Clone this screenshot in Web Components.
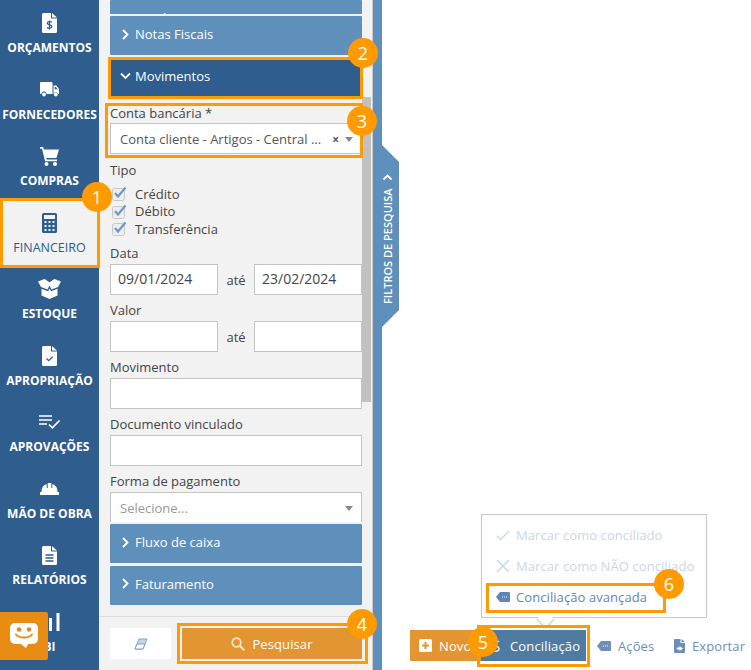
<!DOCTYPE html>
<html lang="pt-BR">
<head>
<meta charset="utf-8">
<title>Conciliação</title>
<style>
  html, body { margin: 0; height: 100%; overflow: hidden; background: #fff; }
  body { font-family: "Open Sans", "Liberation Sans", sans-serif; font-size: 13px; }
  svg { display: block; }
</style>
</head>
<body>
<app-shell>
  <side-nav>
    <nav-item label="ORÇAMENTOS"><svg width="15" height="20" viewBox="0 0 15 20"><path fill="#fff" d="M1.500 0H9v5.500h6V18.500a1.500 1.500 0 0 1-1.500 1.500h-12A1.500 1.500 0 0 1 0 18.500V1.500A1.500 1.500 0 0 1 1.500 0zM10 0l5 4.500h-5z"/><path fill="none" stroke="#2e5d8e" stroke-width="1.300" d="M9.800 9.300C9 8.400 5.300 8.300 5.300 10.300c0 2 4.600 1.300 4.600 3.300 0 2-3.900 1.900-4.900.9M7.500 7.500v9"/></svg></nav-item>
    <nav-item label="FORNECEDORES"><svg width="19" height="15" viewBox="0 0 19 15"><path fill="#fff" d="M1 0h10.500a1 1 0 0 1 1 1v11H6.500a2.500 2.500 0 0 0-5 0H1a1 1 0 0 1-1-1V1a1 1 0 0 1 1-1zM13.500 3.500h2.700L19 7v5h-.8a2.500 2.500 0 0 0-4.700 0z"/><circle cx="4" cy="12.500" r="1.900" fill="#fff"/><circle cx="15.800" cy="12.500" r="1.900" fill="#fff"/><path fill="#2e5d8e" d="M14.700 5h1.200l1.700 2.200h-2.900z"/></svg></nav-item>
    <nav-item label="COMPRAS"><svg width="19" height="19" viewBox="0 0 19 19"><path fill="#fff" d="M0 0h3.200l.7 2.500H19l-2.600 8.500H6.300l.4 1.600H17v1.700H5.100L2 1.700H0z"/><circle cx="6.500" cy="17" r="2" fill="#fff"/><circle cx="15" cy="17" r="2" fill="#fff"/></svg></nav-item>
    <nav-item label="FINANCEIRO" active><svg width="15" height="20" viewBox="0 0 15 20"><path fill="#2e5d8e" fill-rule="evenodd" d="M1.500 0h12A1.500 1.500 0 0 1 15 1.500v17a1.500 1.500 0 0 1-1.500 1.500h-12A1.500 1.500 0 0 1 0 18.500v-17A1.500 1.500 0 0 1 1.500 0zM2 2v4h11V2zM2.500 8v2h2V8zm4 0v2h2V8zm4 0v2h2V8zm-8 4v2h2v-2zm4 0v2h2v-2zm4 0v2h2v-2zm-8 4v2h2v-2zm4 0v2h2v-2zm4 0v2h2v-2z"/></svg></nav-item>
    <nav-item label="ESTOQUE"><svg width="23" height="20" viewBox="0 0 23 20"><path fill="#fff" d="M0 2.500 6.500 0 11.500 3.200 16.500 0 23 2.500 20 8 13.500 10.500 11.500 6.500 9.500 10.500 3 8zM3.500 9.800 10 12.300 11.500 9.500 13 12.300 19.500 9.800V16.500L11.500 20 3.500 16.500z"/></svg></nav-item>
    <nav-item label="APROPRIAÇÃO"><svg width="15" height="20" viewBox="0 0 15 20"><path fill="#fff" d="M1.500 0H9v5.500h6V18.500a1.500 1.500 0 0 1-1.500 1.500h-12A1.500 1.500 0 0 1 0 18.500V1.500A1.500 1.500 0 0 1 1.500 0zM10 0l5 4.500h-5z"/><path fill="none" stroke="#2e5d8e" stroke-width="1.300" d="M4.500 12.500l2.200 2.200 4-4"/></svg></nav-item>
    <nav-item label="APROVAÇÕES"><svg width="21" height="14" viewBox="0 0 21 14"><path fill="none" stroke="#fff" stroke-width="1.700" d="M0 1h13M0 5h13M0 9h8M10 9.500l3.300 3.300L20.500 5.500"/></svg></nav-item>
    <nav-item label="MÃO DE OBRA"><svg width="19" height="12" viewBox="0 0 19 12"><path fill="#fff" d="M7.700 0h3.600v5h1V1A8 8 0 0 1 17.500 9H19v3H0V9h1.500A8 8 0 0 1 6.700 1v4h1z"/></svg></nav-item>
    <nav-item label="RELATÓRIOS"><svg width="15" height="19" viewBox="0 0 15 19"><path fill="#fff" d="M1.500 0H9v5.500h6V17.500a1.500 1.500 0 0 1-1.500 1.500h-12A1.500 1.500 0 0 1 0 17.500V1.500A1.500 1.500 0 0 1 1.500 0zM10 0l5 4.500h-5z"/><path fill="none" stroke="#2e5d8e" stroke-width="1.500" d="M3.500 9h8M3.500 12h8M3.500 15h8"/></svg></nav-item>
    <nav-item label="BI"><svg width="24" height="18" viewBox="0 0 24 18"><path fill="#fff" d="M5 10h3v8H5zM11 5h3v13h-3zM18.500 0h3v18h-3z"/></svg></nav-item>
  </side-nav>

  <filter-panel>
    <acc-header cut>Localização</acc-header>
    <acc-header>Notas Fiscais</acc-header>
    <acc-header open>Movimentos</acc-header>

    <form-field label="Conta bancária *" style="margin-top:7px">
      <select-box value="Conta cliente - Artigos - Central ..." clear style="margin-top:-1px"></select-box>
    </form-field>

    <form-field label="Tipo" style="margin-top:7px;margin-bottom:6.500px">
      <check-list>
        <check-row>Crédito</check-row>
        <check-row>Débito</check-row>
        <check-row>Transferência</check-row>
      </check-list>
    </form-field>

    <form-field label="Data">
      <range-row from="09/01/2024" to="23/02/2024"></range-row>
    </form-field>
    <form-field label="Valor">
      <range-row></range-row>
    </form-field>
    <form-field label="Movimento"><text-box></text-box></form-field>
    <form-field label="Documento vinculado"><text-box></text-box></form-field>
    <form-field label="Forma de pagamento" style="margin-bottom:2px">
      <select-box placeholder="Selecione..." open-bottom></select-box>
    </form-field>

    <acc-header>Fluxo de caixa</acc-header>
    <acc-header>Faturamento</acc-header>
  </filter-panel>

  <filter-tab></filter-tab>

  <main-area>
    <pop-menu>
      <menu-row disabled>
        <svg slot="icon" width="14" height="11" viewBox="0 0 14 11"><path fill="none" stroke="currentColor" stroke-width="1.400" d="M1 6l3.500 3.500L13 1"/></svg>
        Marcar como conciliado
      </menu-row>
      <menu-row disabled>
        <svg slot="icon" width="14" height="14" viewBox="0 0 14 14"><path fill="none" stroke="currentColor" stroke-width="1.500" d="M1 1l12 12M13 1L1 13"/></svg>
        Marcar como NÃO conciliado
      </menu-row>
      <menu-row>
        <svg slot="icon" width="14" height="10" viewBox="0 0 14 10"><path fill="currentColor" d="M4 0h9a1 1 0 0 1 1 1v8a1 1 0 0 1-1 1H4L0 5z"/><path stroke="#fff" stroke-width="1.200" stroke-dasharray="1 1" d="M6 5h5"/></svg>
        Conciliação avançada
      </menu-row>
    </pop-menu>
    <tool-bar>
      <tool-button variant="orange">
        <svg slot="icon" width="13" height="13" viewBox="0 0 13 13"><rect width="13" height="13" rx="1.500" fill="#fff"/><path stroke="#e29530" stroke-width="2" d="M6.500 3v7M3 6.500h7"/></svg>
        Novo
      </tool-button>
      <tool-button variant="blue">
        <svg slot="icon" width="8" height="14" viewBox="0 0 8 14"><path fill="none" stroke="#dce6f0" stroke-width="1.500" d="M7 3C5.500 1 1 1.500 1 4c0 3 6 2.500 6 6 0 2.500-4.500 3-6 1"/></svg>
        Conciliação
      </tool-button>
      <tool-button>
        <svg slot="icon" width="14" height="10" viewBox="0 0 14 10"><path fill="currentColor" d="M4 0h9a1 1 0 0 1 1 1v8a1 1 0 0 1-1 1H4L0 5z"/><path stroke="#fff" stroke-width="1.200" stroke-dasharray="1 1" d="M6 5h5"/></svg>
        Ações
      </tool-button>
      <tool-button>
        <svg slot="icon" width="11" height="14" viewBox="0 0 11 14"><path fill="currentColor" d="M1 0h5.500v4H11v9a1 1 0 0 1-1 1H1a1 1 0 0 1-1-1V1a1 1 0 0 1 1-1zM7.500 0 11 3H7.500z"/><path fill="#fff" d="M3 8.500h2.500V7L9 9.500 5.500 12v-1.500H3z"/></svg>
        Exportar
      </tool-button>
    </tool-bar>
  </main-area>

  <chat-button></chat-button>

  <!-- marcações do tutorial por cima da tela -->
  <mark-box x="0" y="198" w="100" h="70"></mark-box>
  <mark-box x="108" y="57" w="255" h="42"></mark-box>
  <mark-box x="105" y="103" w="258" h="55"></mark-box>
  <mark-box x="177" y="623" w="191" h="41"></mark-box>
  <mark-box x="477" y="625" w="113" h="42"></mark-box>
  <mark-box x="486" y="583" w="180" h="30"></mark-box>
  <step-badge x="97" y="197">1</step-badge>
  <step-badge x="363" y="53">2</step-badge>
  <step-badge x="362" y="121">3</step-badge>
  <step-badge x="362" y="624">4</step-badge>
  <step-badge x="483" y="642">5</step-badge>
  <step-badge x="669" y="584">6</step-badge>
</app-shell>

<script>
function shadowElement(name, html, extend) {
  const template = document.createElement('template');
  template.innerHTML = html;

  class Base extends HTMLElement {
    constructor() {
      super();
      this.attachShadow({ mode: 'open' });
      this.shadowRoot.appendChild(template.content.cloneNode(true));
    }
  }

  customElements.define(name, extend ? extend(Base) : Base);
}

shadowElement('app-shell', `
  <style>
    :host {
      display: flex;
      position: relative;
      width: 100%;
      height: 100vh;
      overflow: hidden;
    }
  </style>
  <slot></slot>
`);

shadowElement('side-nav', `
  <style>
    :host {
      display: flex;
      flex-direction: column;
      flex: none;
      width: 99px;
      height: 100%;
      background: #2e5d8e;
    }
  </style>
  <slot></slot>
`);

shadowElement('nav-item', `
  <style>
    :host {
      display: flex;
      flex-direction: column;
      align-items: center;
      flex: none;
      height: 66.5px;
      box-sizing: border-box;
      padding-top: 7px;
      color: #fff;
      font-size: 12px;
      font-weight: 700;
    }
    :host([active]) {
      background: #f2f2f2;
      color: #2e5d8e;
      font-size: 12.5px;
      font-weight: 400;
    }
    .icon {
      display: flex;
      align-items: center;
      justify-content: center;
      height: 32px;
    }
    .label {
      margin-top: 1px;
      line-height: 16px;
      white-space: nowrap;
    }
  </style>
  <div class="icon"><slot></slot></div>
  <div class="label"></div>
`, Base => class extends Base {
  connectedCallback() {
    this.shadowRoot.querySelector('.label').textContent = this.getAttribute('label');
  }
});

shadowElement('filter-panel', `
  <style>
    :host {
      display: flex;
      flex-direction: column;
      flex: none;
      position: relative;
      box-sizing: border-box;
      width: 274px;
      height: 100%;
      background: #f2f2f2;
      border-right: 1px solid #cfcac4;
      color: #444;
    }
    .scroll {
      flex: none;
      height: 616px;
      box-sizing: border-box;
      padding: 0 10px 0 11px;
      overflow: hidden;
    }
    .thumb {
      position: absolute;
      top: 97px;
      right: 1px;
      width: 9px;
      height: 305px;
      background: #c1c1c1;
    }
    .footer {
      display: flex;
      gap: 11px;
      flex: none;
      height: 54px;
      box-sizing: border-box;
      padding: 11px 10px 0 11px;
      border-top: 1px solid #dcdcdc;
    }
    .clear {
      display: flex;
      align-items: center;
      justify-content: center;
      width: 61px;
      height: 31px;
      background: #fff;
    }
    .search {
      display: flex;
      align-items: center;
      justify-content: center;
      gap: 7px;
      width: 180px;
      height: 31px;
      background: #e29530;
      color: #fff;
      font-size: 13px;
      letter-spacing: .1px;
    }
  </style>
  <div class="scroll"><slot></slot></div>
  <div class="thumb"></div>
  <div class="footer">
    <div class="clear">
      <svg width="14" height="12" viewBox="0 0 14 12"><path fill="#c6d6e6" stroke="#7fa3c6" stroke-width="1" d="M5 1h8l-4 10H1z"/><path fill="#fff" stroke="#7fa3c6" stroke-width="1" d="M3 6h8l-2 5H1z"/></svg>
    </div>
    <div class="search">
      <svg width="14" height="14" viewBox="0 0 14 14"><circle cx="5.500" cy="5.500" r="4.300" fill="none" stroke="#fbe6c8" stroke-width="1.700"/><path stroke="#fbe6c8" stroke-width="2" d="M8.800 8.800 13.300 13.300"/></svg>
      <span>Pesquisar</span>
    </div>
  </div>
`);

shadowElement('acc-header', `
  <style>
    :host {
      display: flex;
      align-items: center;
      gap: 4px;
      box-sizing: border-box;
      height: 39.4px;
      margin-bottom: 2.2px;
      padding: 0 0 3px 10px;
      background: #5f8fbb;
      color: #fff;
      font-size: 13px;
      border-radius: 1px;
    }
    :host([open]) {
      background: #2e5d8e;
    }
    :host([cut]) {
      height: 14px;
      margin-bottom: 2px;
      padding: 0 0 0 10px;
      align-items: flex-end;
      overflow: hidden;
    }
    :host([cut]) .text, :host([cut]) svg {
      position: relative;
      top: 13px;
    }
    svg { flex: none; width: 11px; height: 11px; }
  </style>
  <svg viewBox="0 0 11 11"><path fill="none" stroke="#fff" stroke-width="1.800" d=""/></svg>
  <span class="text"><slot></slot></span>
`, Base => class extends Base {
  connectedCallback() {
    const open = this.hasAttribute('open');
    this.shadowRoot.querySelector('path').setAttribute('d', open ? 'M1 3.500 5.500 8 10 3.500' : 'M3 1l4.500 4.500L3 10');
  }
});

shadowElement('form-field', `
  <style>
    :host {
      display: block;
      margin-bottom: 6px;
    }
    .label {
      height: 18px;
      margin-bottom: 2px;
      line-height: 18px;
      font-size: 13px;
      white-space: nowrap;
    }
  </style>
  <div class="label"></div>
  <slot></slot>
`, Base => class extends Base {
  connectedCallback() {
    this.shadowRoot.querySelector('.label').textContent = this.getAttribute('label');
  }
});

shadowElement('text-box', `
  <style>
    :host {
      display: block;
      box-sizing: border-box;
      height: 31px;
      padding: 0 7px;
      background: #fff;
      border: 1px solid #c4c4c4;
      color: #444;
      font-size: 14px;
      line-height: 28px;
      white-space: nowrap;
    }
  </style>
  <slot></slot>
`);

shadowElement('select-box', `
  <style>
    :host {
      display: flex;
      align-items: center;
      box-sizing: border-box;
      height: 31px;
      padding: 2px 8px 0 9px;
      background: #fff;
      border: 1px solid #c4c4c4;
      font-size: 13px;
      white-space: nowrap;
    }
    :host([open-bottom]) {
      height: 30px;
      border-bottom: 0;
    }
    .value { flex: 1; color: #555; }
    .value.empty { color: #999; }
    .clear { margin-right: 6px; color: #555; font-size: 12px; font-weight: 700; }
    .arrow {
      width: 0;
      height: 0;
      border-left: 4.500px solid transparent;
      border-right: 4.500px solid transparent;
      border-top: 5px solid #888;
    }
  </style>
  <span class="value"></span>
  <span class="clear">×</span>
  <span class="arrow"></span>
`, Base => class extends Base {
  connectedCallback() {
    const value = this.shadowRoot.querySelector('.value');
    value.textContent = this.getAttribute('value') || this.getAttribute('placeholder');
    value.classList.toggle('empty', !this.hasAttribute('value'));
    if (!this.hasAttribute('clear')) {
      this.shadowRoot.querySelector('.clear').remove();
    }
  }
});

shadowElement('range-row', `
  <style>
    :host {
      display: flex;
      align-items: center;
    }
    text-box { flex: 1; }
    .to {
      flex: none;
      width: 36px;
      padding-top: 2px;
      text-align: center;
      font-size: 13px;
    }
  </style>
  <text-box class="from"></text-box>
  <span class="to">até</span>
  <text-box class="until"></text-box>
`, Base => class extends Base {
  connectedCallback() {
    this.shadowRoot.querySelector('.from').textContent = this.getAttribute('from') || '';
    this.shadowRoot.querySelector('.until').textContent = this.getAttribute('to') || '';
  }
});

shadowElement('check-list', `
  <style>
    :host {
      display: block;
      margin-top: 6px;
    }
  </style>
  <slot></slot>
`);

shadowElement('check-row', `
  <style>
    :host {
      display: flex;
      align-items: center;
      gap: 8px;
      height: 17.5px;
      padding-left: 2px;
      font-size: 13px;
    }
    svg { flex: none; }
  </style>
  <svg width="15" height="15" viewBox="0 0 15 15"><rect x="0.500" y="2.500" width="12" height="12" rx="2" fill="#eee" stroke="#c8c8c8"/><path fill="none" stroke="#6c9ac6" stroke-width="2.200" d="M3 7l3 3.500L13.500 1.500"/></svg>
  <span><slot></slot></span>
`);

shadowElement('filter-tab', `
  <style>
    :host {
      display: block;
      flex: none;
      position: relative;
      width: 9px;
      height: 100%;
      background: #5f8fbb;
    }
    .tab {
      position: absolute;
      left: 9px;
      top: 145px;
      width: 17px;
      height: 182px;
      background: #5f8fbb;
      clip-path: polygon(0 0, 100% 17px, 100% 165px, 0 100%);
    }
    .chevron {
      position: absolute;
      left: 0;
      top: 28px;
    }
    .text {
      position: absolute;
      left: -3px;
      top: 45px;
      width: 17px;
      height: 113px;
      display: flex;
      align-items: center;
      justify-content: center;
      writing-mode: vertical-rl;
      transform: rotate(180deg);
      color: #fff;
      font-size: 11px;
      font-weight: 600;
      white-space: nowrap;
    }
  </style>
  <div class="tab">
    <svg class="chevron" width="11" height="9" viewBox="0 0 11 9"><path fill="none" stroke="#fff" stroke-width="1.800" d="M1.500 6.500 5.500 2.500 9.500 6.500"/></svg>
    <div class="text">FILTROS DE PESQUISA</div>
  </div>
`);

shadowElement('main-area', `
  <style>
    :host {
      display: flex;
      flex-direction: column;
      justify-content: flex-end;
      align-items: flex-start;
      flex: 1;
      min-width: 0;
      height: 100%;
      box-sizing: border-box;
      padding: 0 0 9px 28px;
    }
  </style>
  <slot></slot>
`);

shadowElement('tool-bar', `
  <style>
    :host {
      display: flex;
      align-items: center;
      white-space: nowrap;
    }
  </style>
  <slot></slot>
`);

shadowElement('tool-button', `
  <style>
    :host {
      display: flex;
      align-items: center;
      gap: 7px;
      height: 31px;
      box-sizing: border-box;
      padding: 0 0 0 11px;
      width: 88px;
      color: #6f8fb8;
      font-size: 13px;
      letter-spacing: .1px;
    }
    :host([variant="orange"]) {
      width: 71px;
      padding-left: 9px;
      background: #e29530;
      color: #fff;
    }
    :host([variant="blue"]) {
      width: 105px;
      padding-left: 11px;
      gap: 10px;
      background: #4f7ba3;
      color: #fff;
      letter-spacing: .15px;
    }
    :host(:last-child) { padding-left: 0; }
    ::slotted(svg) { flex: none; }
  </style>
  <slot name="icon"></slot>
  <span><slot></slot></span>
`);

shadowElement('pop-menu', `
  <style>
    :host {
      display: block;
      position: absolute;
      left: 481px;
      top: 514px;
      box-sizing: border-box;
      width: 226px;
      height: 104px;
      padding-top: 5px;
      background: #fff;
      border: 1px solid #c8c8c8;
    }
    .tip {
      position: absolute;
      left: 57px;
      bottom: -9px;
      width: 12px;
      height: 12px;
      background: #fff;
      border-right: 1px solid #c8c8c8;
      border-bottom: 1px solid #c8c8c8;
      transform: rotate(45deg);
    }
  </style>
  <slot></slot>
  <div class="tip"></div>
`);

shadowElement('menu-row', `
  <style>
    :host {
      display: flex;
      align-items: center;
      height: 30.7px;
      padding-left: 14px;
      color: #5f86b5;
      font-size: 13px;
      letter-spacing: .08px;
      white-space: nowrap;
    }
    :host([disabled]) {
      color: #c9d8e7;
    }
    .icon {
      display: flex;
      justify-content: center;
      flex: none;
      width: 14px;
      margin-right: 6px;
    }
  </style>
  <span class="icon"><slot name="icon"></slot></span>
  <span><slot></slot></span>
`);

shadowElement('chat-button', `
  <style>
    :host {
      display: flex;
      align-items: center;
      justify-content: center;
      position: absolute;
      left: 0;
      top: 612px;
      width: 48px;
      height: 48px;
      background: #e88c14;
      border-radius: 0 2px 2px 0;
    }
  </style>
  <svg width="28" height="26" viewBox="0 0 28 26">
    <path fill="#fff" d="M5 0h18a5 5 0 0 1 5 5v11a5 5 0 0 1-5 5h-5l-2 4-5-4H5a5 5 0 0 1-5-5V5a5 5 0 0 1 5-5z"/>
    <circle cx="9" cy="6.500" r="2.300" fill="#e88c14"/>
    <circle cx="19" cy="6.500" r="2.300" fill="#e88c14"/>
    <path fill="none" stroke="#e88c14" stroke-width="2" stroke-linecap="round" d="M6 11.500c3 4 13 4 16 0"/>
  </svg>
`);

shadowElement('mark-box', `
  <style>
    :host {
      display: block;
      position: absolute;
      box-sizing: border-box;
      border: 3px solid #ff9a00;
      pointer-events: none;
    }
  </style>
`, Base => class extends Base {
  connectedCallback() {
    this.style.left = this.getAttribute('x') + 'px';
    this.style.top = this.getAttribute('y') + 'px';
    this.style.width = this.getAttribute('w') + 'px';
    this.style.height = this.getAttribute('h') + 'px';
  }
});

shadowElement('step-badge', `
  <style>
    :host {
      display: flex;
      align-items: center;
      justify-content: center;
      position: absolute;
      width: 30px;
      height: 30px;
      margin: -15px 0 0 -15px;
      border-radius: 50%;
      background: #ff9a00;
      color: #fff;
      font-size: 18px;
    }
  </style>
  <slot></slot>
`, Base => class extends Base {
  connectedCallback() {
    this.style.left = this.getAttribute('x') + 'px';
    this.style.top = this.getAttribute('y') + 'px';
  }
});
</script>
</body>
</html>
